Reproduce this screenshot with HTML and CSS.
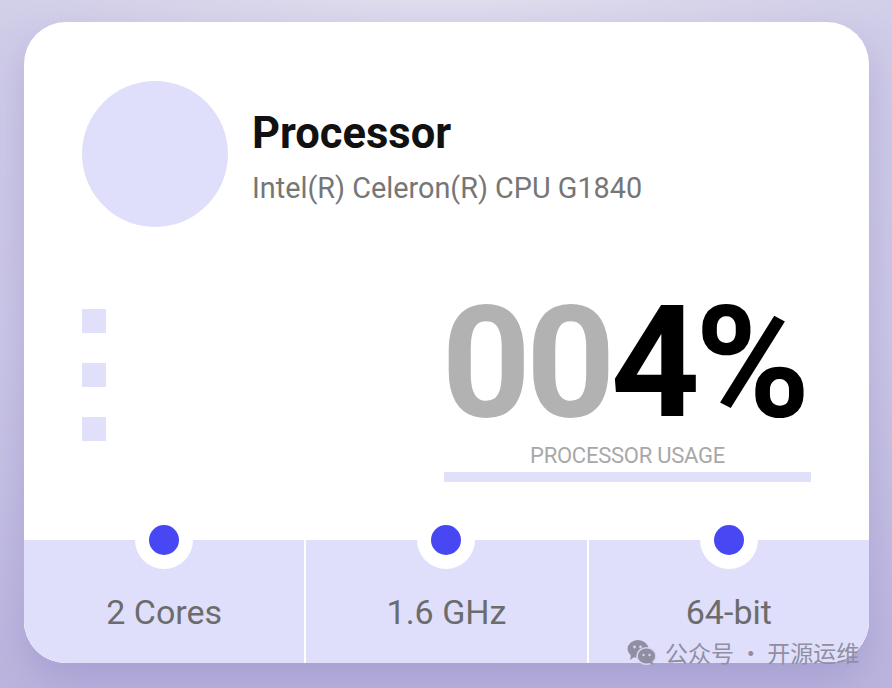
FILE: index.html
```html
<!DOCTYPE html>
<html lang="en">
<head>
<meta charset="utf-8">
<title>Processor</title>
<link rel="stylesheet" href="styles.css">
</head>
<body>
<div class="card">
  <div class="header">
    <div class="avatar"></div>
    <div class="titles">
      <div class="title">Processor</div>
      <div class="subtitle">Intel(R) Celeron(R) CPU G1840</div>
    </div>
  </div>
  <div class="middle">
    <div class="squares">
      <span class="sq"></span>
      <span class="sq"></span>
      <span class="sq"></span>
    </div>
    <div class="usage">
      <div class="big"><span class="dim">00</span>4%</div>
      <div class="label">PROCESSOR USAGE</div>
      <div class="bar"></div>
    </div>
  </div>
  <div class="stats">
    <div class="stat"><span class="dot"></span><span class="val">2 Cores</span></div>
    <div class="stat"><span class="dot"></span><span class="val">1.6 GHz</span></div>
    <div class="stat"><span class="dot"></span><span class="val">64-bit</span></div>
  </div>
</div>
<div class="watermark">
  <svg class="wx" width="30" height="26" viewBox="0 0 30 26">
    <ellipse cx="11" cy="10" rx="10.5" ry="9" fill="#8f8ea3"/>
    <path d="M4 16 L3 21 L8 17.5 Z" fill="#8f8ea3"/>
    <ellipse cx="19.5" cy="17" rx="9.5" ry="8.2" fill="#8f8ea3" stroke="#d6d5ee" stroke-width="1.6"/>
    <path d="M25 22.5 L27 26 L22 24 Z" fill="#8f8ea3"/>
    <circle cx="7.5" cy="8" r="1.4" fill="#d6d5ee"/>
    <circle cx="13.5" cy="8" r="1.4" fill="#d6d5ee"/>
    <circle cx="16.5" cy="16" r="1.2" fill="#d6d5ee"/>
    <circle cx="22.5" cy="16" r="1.2" fill="#d6d5ee"/>
  </svg>
  <span>公众号 · 开源运维</span>
</div>
</body>
</html>
```
FILE: styles.css
```css
html, body {
  margin: 0;
  padding: 0;
}
body {
  width: 892px;
  height: 688px;
  overflow: hidden;
  position: relative;
  font-family: Roboto, "Liberation Sans", sans-serif;
  background:
    radial-gradient(ellipse 55% 10% at 50% 0%, rgba(226,224,238,0.9), rgba(226,224,238,0) 100%),
    linear-gradient(180deg, #d0cde8 0%, #cbc7e6 50%, #bbb5de 100%);
  padding: 22px 23px 0 24px;
  box-sizing: border-box;
}
.card {
  width: 845px;
  height: 641px;
  background: #ffffff;
  border-radius: 42px;
  overflow: hidden;
  display: flex;
  flex-direction: column;
  box-shadow: 0 18px 40px rgba(110, 100, 180, 0.28);
}
.header {
  display: flex;
  align-items: center;
  gap: 24px;
  padding: 59px 58px 0 58px;
}
.avatar {
  width: 146px;
  height: 146px;
  border-radius: 50%;
  background: #dfdffb;
  flex: none;
}
.titles {
  display: flex;
  flex-direction: column;
  gap: 12px;
  margin-top: 6px;
}
.title {
  font-size: 43.5px;
  line-height: 50px;
  font-weight: 700;
  color: #111111;
}
.subtitle {
  font-size: 28.8px;
  line-height: 34px;
  color: #767676;
}
.middle {
  display: flex;
  justify-content: space-between;
  align-items: flex-start;
  padding: 58px 58px 0 58px;
}
.squares {
  display: flex;
  flex-direction: column;
  gap: 30px;
  padding-top: 24px;
}
.sq {
  display: block;
  width: 24px;
  height: 24px;
  background: #e0e0fb;
}
.usage {
  width: 367px;
  display: flex;
  flex-direction: column;
  align-items: center;
}
.big {
  font-size: 156px;
  line-height: 156px;
  font-weight: 700;
  letter-spacing: -5px;
  color: #000000;
  white-space: nowrap;
  margin-right: 8px;
}
.dim {
  color: #b2b2b2;
}
.label {
  font-size: 22px;
  line-height: 26px;
  letter-spacing: -0.25px;
  color: #a8a8a8;
  margin-top: 2px;
}
.bar {
  width: 367px;
  height: 10px;
  background: #e0e0fb;
  margin-top: 3px;
}
.stats {
  margin-top: 58px;
  flex: 1;
  display: grid;
  grid-template-columns: 1fr 1fr 1fr;
  gap: 2px;
  background: #ffffff;
}
.stat {
  position: relative;
  background: #dfdffb;
  display: flex;
  justify-content: center;
  padding-top: 52px;
}
.dot {
  position: absolute;
  top: -29px;
  left: 50%;
  margin-left: -29px;
  width: 58px;
  height: 58px;
  border-radius: 50%;
  background: #ffffff;
  display: flex;
  align-items: center;
  justify-content: center;
}
.dot::after {
  content: "";
  width: 30px;
  height: 30px;
  border-radius: 50%;
  background: #4747f4;
}
.val {
  font-size: 34px;
  line-height: 40px;
  color: #6c6c6c;
}
.watermark {
  position: absolute;
  left: 627px;
  top: 637px;
  display: flex;
  align-items: center;
  gap: 8px;
  font-family: "Noto Sans CJK SC", sans-serif;
  font-size: 23px;
  color: #8f8ea3;
  line-height: 30px;
}
.wx {
  display: block;
}
```
